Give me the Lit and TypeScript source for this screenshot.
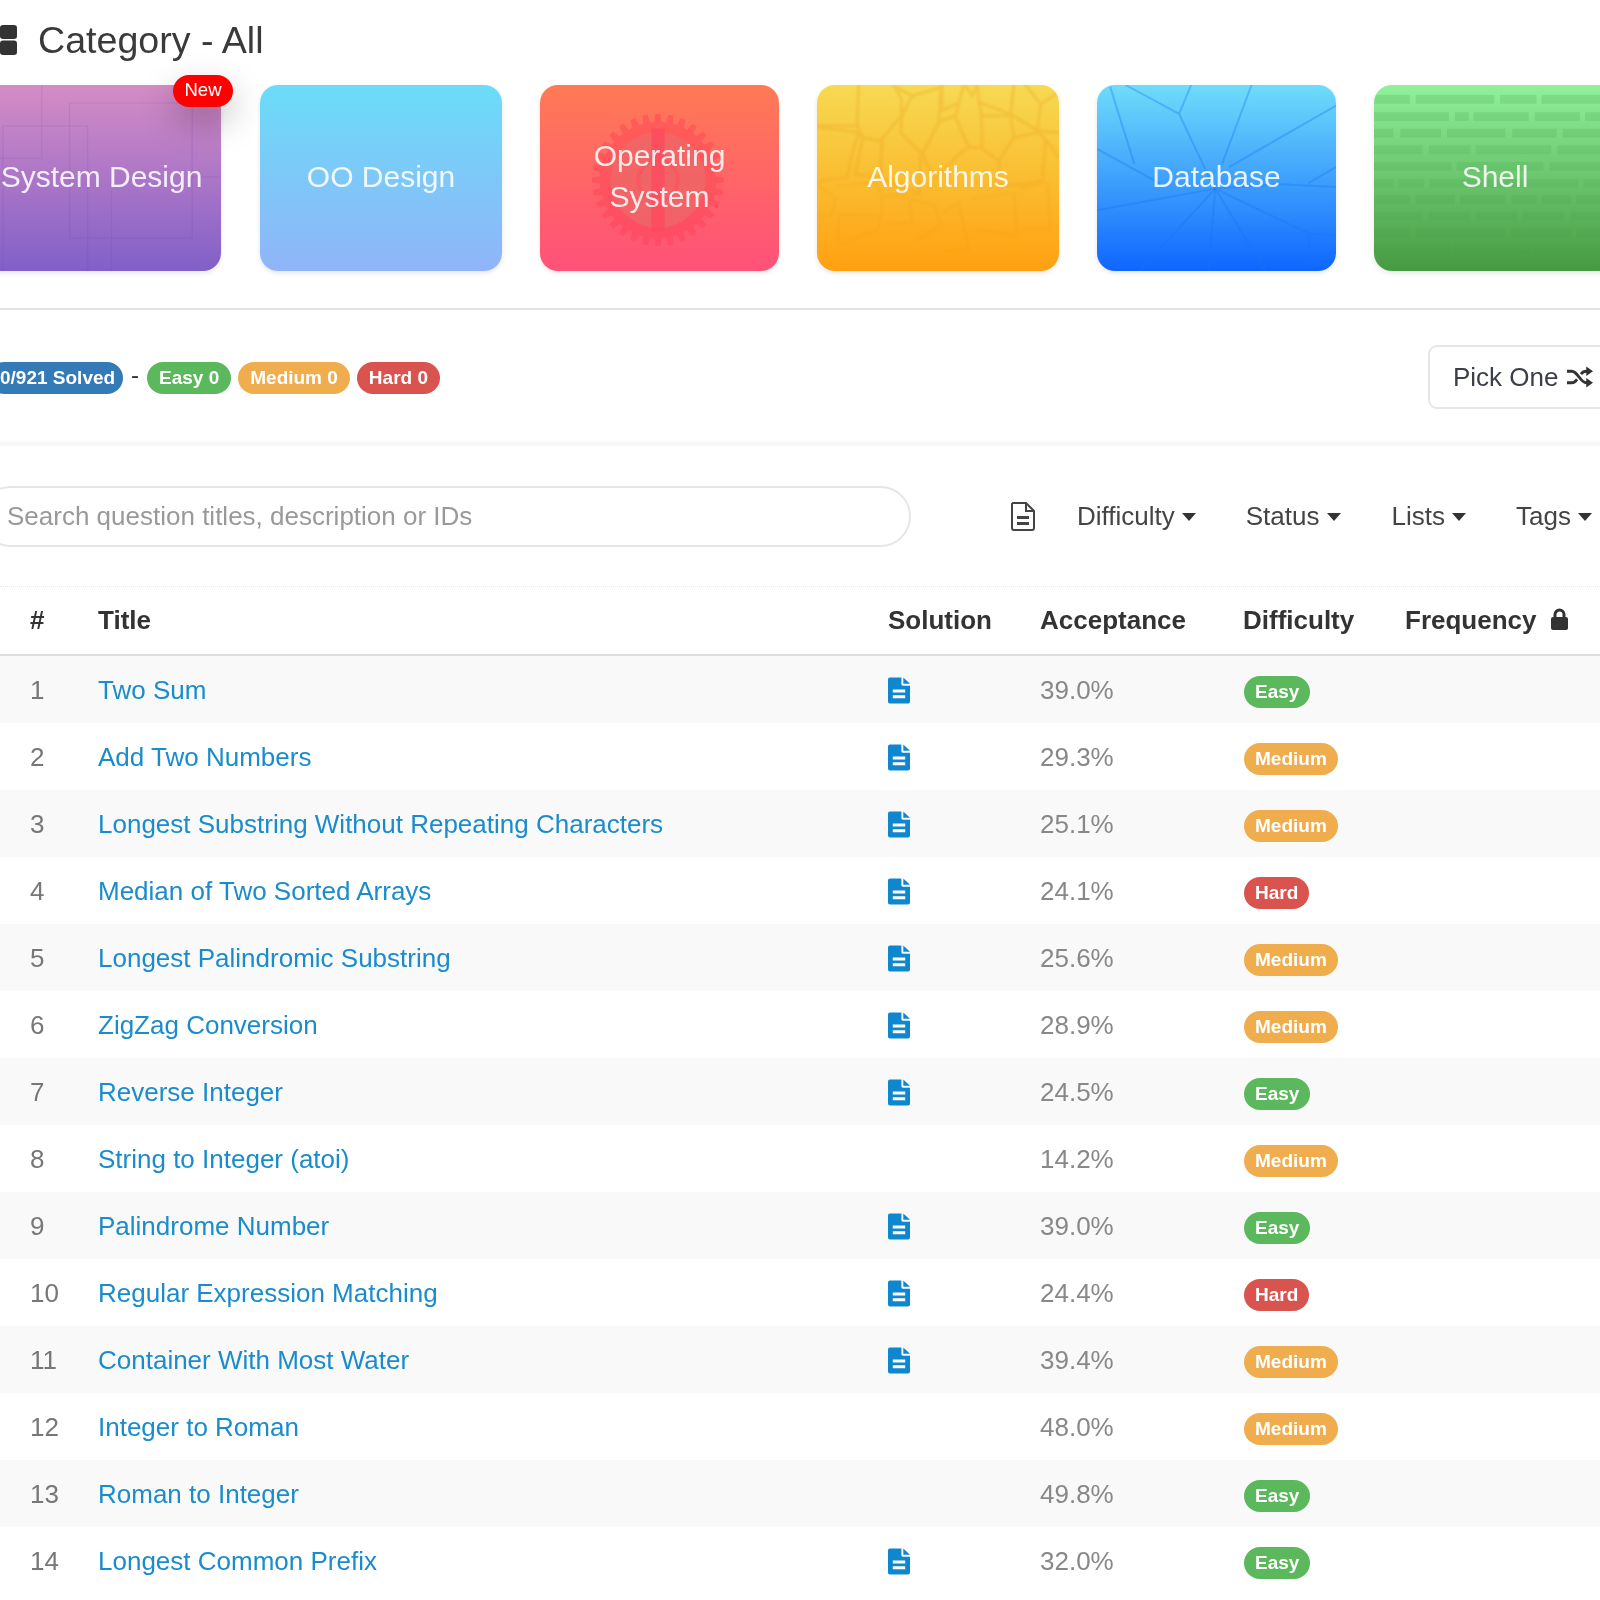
import { LitElement, html, css, svg } from "lit";
import { customElement } from "lit/decorators.js";

type Row = [number, string, boolean, string, string];
const rows: Row[] = [
  [1, "Two Sum", true, "39.0%", "Easy"],
  [2, "Add Two Numbers", true, "29.3%", "Medium"],
  [3, "Longest Substring Without Repeating Characters", true, "25.1%", "Medium"],
  [4, "Median of Two Sorted Arrays", true, "24.1%", "Hard"],
  [5, "Longest Palindromic Substring", true, "25.6%", "Medium"],
  [6, "ZigZag Conversion", true, "28.9%", "Medium"],
  [7, "Reverse Integer", true, "24.5%", "Easy"],
  [8, "String to Integer (atoi)", false, "14.2%", "Medium"],
  [9, "Palindrome Number", true, "39.0%", "Easy"],
  [10, "Regular Expression Matching", true, "24.4%", "Hard"],
  [11, "Container With Most Water", true, "39.4%", "Medium"],
  [12, "Integer to Roman", false, "48.0%", "Medium"],
  [13, "Roman to Integer", false, "49.8%", "Easy"],
  [14, "Longest Common Prefix", true, "32.0%", "Easy"],
];

const gearPoints = () => {
  const pts: string[] = [];
  const n = 32;
  for (let i = 0; i < n; i++) {
    const a = (i / n) * Math.PI * 2;
    const s = (Math.PI * 2) / n;
    const p = (r: number, t: number) =>
      `${(100 + r * Math.sin(t)).toFixed(2)},${(100 - r * Math.cos(t)).toFixed(2)}`;
    pts.push(p(88, a - s * 0.32), p(100, a - s * 0.2), p(100, a + s * 0.2), p(88, a + s * 0.32));
  }
  return pts.join(" ");
};

const bricks: [number, number[][]][] = [
  [103, [[912, 1015], [1032, 1258], [1275, 1380], [1395, 1610]]],
  [155, [[912, 1128], [1145, 1185], [1198, 1358], [1375, 1505], [1520, 1610]]],
  [205, [[912, 968], [988, 1105], [1122, 1290], [1310, 1438], [1455, 1610]]],
  [255, [[912, 1052], [1070, 1190], [1205, 1422], [1440, 1610]]],
  [305, [[912, 1135], [1150, 1400], [1418, 1610]]],
  [355, [[912, 968], [982, 1055], [1072, 1500], [1515, 1610]]],
  [405, [[912, 1015], [1032, 1145], [1160, 1290], [1308, 1380], [1395, 1480], [1495, 1610]]],
  [455, [[912, 1052], [1070, 1190], [1205, 1325], [1340, 1460], [1478, 1610]]],
  [505, [[912, 1015], [1032, 1290], [1308, 1480], [1495, 1610]]],
  [555, [[912, 1128], [1145, 1358], [1375, 1610]]],
];

const cellsTop = [
  "M15 130H135",
  "M140 8L135 125L150 165L205 175L268 100L268 50L245 8",
  "M245 12L300 40L385 15L380 120L330 215L265 150L270 100L300 40",
  "M390 8V85L440 60L455 8",
  "M460 8L480 40L495 8",
  "M495 8L500 60L595 95L605 8",
  "M605 8L595 95L675 145L685 65L640 8",
  "M685 65L740 30M675 145L740 150",
  "M440 60L430 105L470 195L510 195L508 100L500 60",
  "M385 115L430 100M508 100L595 100L605 165L560 235L510 200",
  "M22 135L140 150L120 215L105 285L22 295",
  "M150 175L130 275L205 285L210 180",
  "M210 175L205 285L320 335L325 225",
  "M330 215L370 290L440 215L470 195",
  "M605 165L675 150L700 170L690 295L640 305L560 310L560 235",
  "M700 170L740 225",
];
const cellsBottom = [
  "M15 305L70 345L60 400L15 400",
  "M80 310L190 300L210 340L210 400L80 395V480",
  "M85 400L205 400L200 440L90 485",
  "M215 340L290 340L300 420L215 425",
  "M300 350L370 370L385 430L310 475",
  "M395 390L440 360L470 500L400 505",
  "M480 350L605 330L615 460L490 440",
  "M620 320L705 300L715 440L630 435",
];

const patSystem = svg`<svg class="pat" viewBox="0 0 240 186" preserveAspectRatio="none">
  <g fill="none" stroke="rgba(110,70,180,.16)" stroke-width="1.2">
    <path d="M60 0V73H0"/><path d="M21 41H106V186"/><path d="M21 41V186"/>
    <path d="M88 18H211V153H88Z"/><path d="M211 92H240"/><path d="M130 105V186"/>
  </g></svg>`;

const patOS = svg`<svg class="pat" viewBox="0 0 239 186" preserveAspectRatio="none">
  <defs><filter id="sg" x="-10%" y="-10%" width="120%" height="120%"><feGaussianBlur stdDeviation="1"/></filter></defs>
  <g transform="translate(52 29) scale(.66 .66)" filter="url(#sg)">
    <polygon points=${gearPoints()} fill="rgb(255,62,82)" opacity=".42"/>
    <circle cx="100" cy="100" r="72" fill="rgb(232,112,108)" opacity=".6"/>
    <rect x="90" y="22" width="20" height="156" fill="rgb(255,72,92)" opacity=".75"/>
    <circle cx="100" cy="100" r="30" fill="none" stroke="rgb(255,76,92)" stroke-width="6" opacity=".55"/>
  </g></svg>`;

const patAlg = svg`<svg class="pat" viewBox="15 8 725 557" preserveAspectRatio="none">
  <defs><filter id="sa" x="-5%" y="-5%" width="110%" height="110%"><feGaussianBlur stdDeviation="2.500"/></filter></defs>
  <g fill="none" stroke="rgb(236,160,30)" stroke-linejoin="round" stroke-linecap="round" filter="url(#sa)">
    <g opacity=".3" stroke-width="9">${cellsTop.map((d) => svg`<path d=${d}/>`)}</g>
    <g opacity=".12" stroke-width="8" stroke="rgb(232,140,10)">${cellsBottom.map((d) => svg`<path d=${d}/>`)}</g>
  </g></svg>`;

const patDB = svg`<svg class="pat" viewBox="107 73 693 560" preserveAspectRatio="none">
  <defs><filter id="sd" x="-5%" y="-5%" width="110%" height="110%"><feGaussianBlur stdDeviation="1.500"/></filter></defs>
  <g fill="none" stroke="rgba(25,115,240,.34)" stroke-width="6" filter="url(#sd)">
    <path d="M190 73L345 160L380 73M345 160L450 390M145 78L215 310M555 73L470 310"/>
    <path d="M800 135L490 320M107 265L290 370M107 450L450 385M450 385L230 633M450 385L430 633"/>
    <path d="M450 385L595 633M450 385L720 520L800 525M720 520L730 610M450 385L640 372L800 380M800 320L720 368"/>
  </g></svg>`;

const patShell = svg`<svg class="pat" viewBox="912 73 697 560" preserveAspectRatio="none">
  ${bricks.map(([y, segs], i) =>
    segs.map(([a, b]) => svg`<rect x=${a} y=${y} width=${b - a} height="26" fill="rgba(40,130,50,${(0.15 - i * 0.012).toFixed(3)})"/>`)
  )}</svg>`;

const docSolid = html`<svg class="doc" viewBox="0 0 23 27"><path fill="#0f87cf" d="M2 0h12v7a1.5 1.5 0 0 0 1.5 1.5H23V25a2 2 0 0 1-2 2H2a2 2 0 0 1-2-2V2a2 2 0 0 1 2-2z"/><path fill="#0f87cf" d="M16 0l7 6.500h-7z"/><path fill="#fff" d="M5 12.500h13v3H5zM5 18.500h13v3H5z"/></svg>`;

const caret = html`<i class="caret"></i>`;

@customElement("app-root")
export class AppRoot extends LitElement {
  static styles = css`
    :host { display: block; width: 1600px; height: 1600px; overflow: hidden; background: #fff; font-family: "Liberation Sans", Arial, sans-serif; }
    .page { width: 1600px; height: 1600px; overflow: hidden; filter: blur(0.7px); color: #333; }
    .title { height: 80px; padding-bottom: 5px; display: flex; align-items: center; gap: 21px; font-size: 37.600px; color: #3a3a3a; }
    .title svg { width: 17px; height: 30px; flex: none; }
    .cards { display: flex; gap: 38px; margin-left: -18px; width: 1700px; }
    .card { position: relative; flex: none; width: 239px; height: 186px; box-sizing: border-box; padding-bottom: 4px; border-radius: 18px; box-shadow: 0 2px 5px rgba(0,0,0,.1); display: flex; align-items: center; justify-content: center; text-align: center; color: rgba(255,255,255,.88); font-size: 30px; line-height: 41px; }
    .card:nth-child(even) { width: 242px; }
    .card .clip { position: absolute; inset: 0; overflow: hidden; border-radius: 18px; }
    .pat { position: absolute; inset: 0; width: 100%; height: 100%; display: block; }
    .card span { position: relative; }
    .c1 { background: linear-gradient(#d58cc5, #8160c8); margin-right: 1px; }
    .c2 { background: linear-gradient(#6bdcf8, #90b4f9); }
    .c3 { background: linear-gradient(#ff7a55, #ff5179); }
    .c4 { background: linear-gradient(#f6da52, #ffa010); }
    .c5 { background: linear-gradient(#6fdcfa, #0f66ff); }
    .c6 { background: linear-gradient(#90f19a, #469a41); }
    .new { position: absolute; left: 191px; top: -10px; width: 60px; height: 32px; border-radius: 16px; background: #f00; color: #fff; font-size: 18.500px; line-height: 29px; box-shadow: 0 14px 34px rgba(0,0,0,.26); }
    hr { border: 0; height: 2px; background: #e2e2e2; margin: 37px 0 0; }
    .stats { display: flex; align-items: center; padding: 35px 0 0; height: 64px; gap: 7px; }
    .lbl { display: inline-block; flex: none; height: 32px; line-height: 31px; border-radius: 16px; padding: 0 11px; color: #fff; font-size: 19px; font-weight: 700; box-sizing: border-box; }
    .stats .lbl { padding: 0 12px; margin-top: 1px; }
    .stats .solved { margin-left: -12px; background: #337ab7; width: 135px; white-space: nowrap; text-align: right; padding-right: 11px; }
    .dash { font-size: 24px; margin: -4px 1px 0 1px; color: #333; }
    .Easy { background: #5cb85c; }
    .Medium { background: #f0ad4e; }
    .Hard { background: #d9534f; }
    .pick { margin-left: auto; margin-right: -24px; width: 196px; height: 64px; box-sizing: border-box; border: 2px solid #e6e6e6; border-radius: 9px; display: flex; align-items: center; gap: 8px; padding-left: 23px; font-size: 26px; color: #3a3f4a; background: #fff; white-space: nowrap; }
    .pick svg { width: 26px; height: 22px; flex: none; }
    .soft { height: 7px; margin-top: 31px; background: linear-gradient(#fff, #f5f6f8 60%, #fff); }
    .filter { display: flex; align-items: center; padding-top: 39px; height: 61px; margin-bottom: 39px; font-size: 26px; color: #444; }
    input { box-sizing: border-box; flex: none; margin: 0 0 0 -20px; width: 931px; height: 61px; border: 2px solid #e6e6e6; border-radius: 31px; padding: 0 0 0 25px; font: inherit; color: #555; outline: none; background: #fff; }
    input::placeholder { color: #999; opacity: 1; }
    .fdoc { width: 24px; height: 29px; flex: none; margin-left: 100px; }
    .dd { display: flex; align-items: center; flex: none; gap: 7px; white-space: nowrap; }
    .caret { display: block; width: 0; height: 0; border-left: 7.500px solid transparent; border-right: 7.500px solid transparent; border-top: 8px solid #333; }
    .d1 { margin-left: 42px; } .d2 { margin-left: 50px; } .d3 { margin-left: 51px; } .d4 { margin-left: 50px; }
    .dots { height: 0; border-top: 1px dotted #e8e8e8; }
    .grid { display: grid; grid-template-columns: 68px 790px 152px 203px 162px 1fr; padding-left: 30px; align-items: center; }
    .head { border-bottom: 2px solid #ddd; font-size: 26px; font-weight: 700; color: #333; padding-bottom: 1px; box-sizing: content-box; height: 66px; }
    .head svg { width: 17px; height: 22px; margin-left: 14px; vertical-align: -1px; }
    .row { height: 67px; font-size: 26px; color: #777; }
    .row:nth-child(odd) { background: #f9f9f9; }
    .row > div { padding-top: 1px; }
    .row a { color: #1a8ccc; text-decoration: none; }
    .doc { display: block; width: 22px; height: 27px; }
    .row .lbl { justify-self: start; margin: 5px 0 0 1px; }
    .acc { color: #888; }
  `;

  render() {
    return html`<div class="page">
      <div class="title">
        <svg viewBox="0 0 17 30"><rect x="0" y="0" width="17" height="14" rx="3" fill="#333"/><rect x="0" y="15.500" width="17" height="14.500" rx="3" fill="#333"/></svg>
        <span>Category - All</span>
      </div>
      <div class="cards">
        <div class="card c1"><div class="clip">${patSystem}</div><span>System Design</span><div class="new">New</div></div>
        <div class="card c2"><span>OO Design</span></div>
        <div class="card c3"><div class="clip">${patOS}</div><span>Operating<br />System</span></div>
        <div class="card c4"><div class="clip">${patAlg}</div><span>Algorithms</span></div>
        <div class="card c5"><div class="clip">${patDB}</div><span>Database</span></div>
        <div class="card c6"><div class="clip">${patShell}</div><span>Shell</span></div>
      </div>
      <hr />
      <div class="stats">
        <span class="lbl solved">0/921 Solved</span>
        <span class="dash">-</span>
        <span class="lbl Easy">Easy 0</span>
        <span class="lbl Medium">Medium 0</span>
        <span class="lbl Hard">Hard 0</span>
        <div class="pick">Pick One
          <svg viewBox="0 0 27 22"><path fill="none" stroke="#333" stroke-width="3" d="M0 5h5c6 0 9 12 15 12h3M0 17h5c2 0 4-1.500 5.500-3.500M14.500 8C16 6 18 5 20 5h3"/><path fill="#333" d="M20 0l7 5-7 5zM20 12l7 5-7 5z"/></svg>
        </div>
      </div>
      <div class="soft"></div>
      <div class="filter">
        <input placeholder="Search question titles, description or IDs" />
        <svg class="fdoc" viewBox="0 0 24 29"><path fill="none" stroke="#444" stroke-width="2" d="M2 1h13l8 8v17a2 2 0 0 1-2 2H3a2 2 0 0 1-2-2V2z"/><path fill="none" stroke="#444" stroke-width="2" d="M15 1v8h8"/><path fill="#444" d="M6 14h12v3H6zM6 20h12v3H6z"/></svg>
        <div class="dd d1">Difficulty ${caret}</div>
        <div class="dd d2">Status ${caret}</div>
        <div class="dd d3">Lists ${caret}</div>
        <div class="dd d4">Tags ${caret}</div>
      </div>
      <div class="dots"></div>
      <div class="grid head">
        <div>#</div><div>Title</div><div>Solution</div><div>Acceptance</div><div>Difficulty</div>
        <div>Frequency<svg viewBox="0 0 17 22"><path fill="none" stroke="#333" stroke-width="3" d="M4 10V6.500a4.500 4.500 0 0 1 9 0V10"/><rect y="9" width="17" height="13" rx="2" fill="#333"/></svg></div>
      </div>
      <div>
        ${rows.map(
          ([n, t, s, a, d]) => html`<div class="grid row">
            <div>${n}</div><div><a>${t}</a></div><div>${s ? docSolid : ""}</div><div class="acc">${a}</div><span class="lbl ${d}">${d}</span><div></div>
          </div>`
        )}
      </div>
    </div>`;
  }
}
